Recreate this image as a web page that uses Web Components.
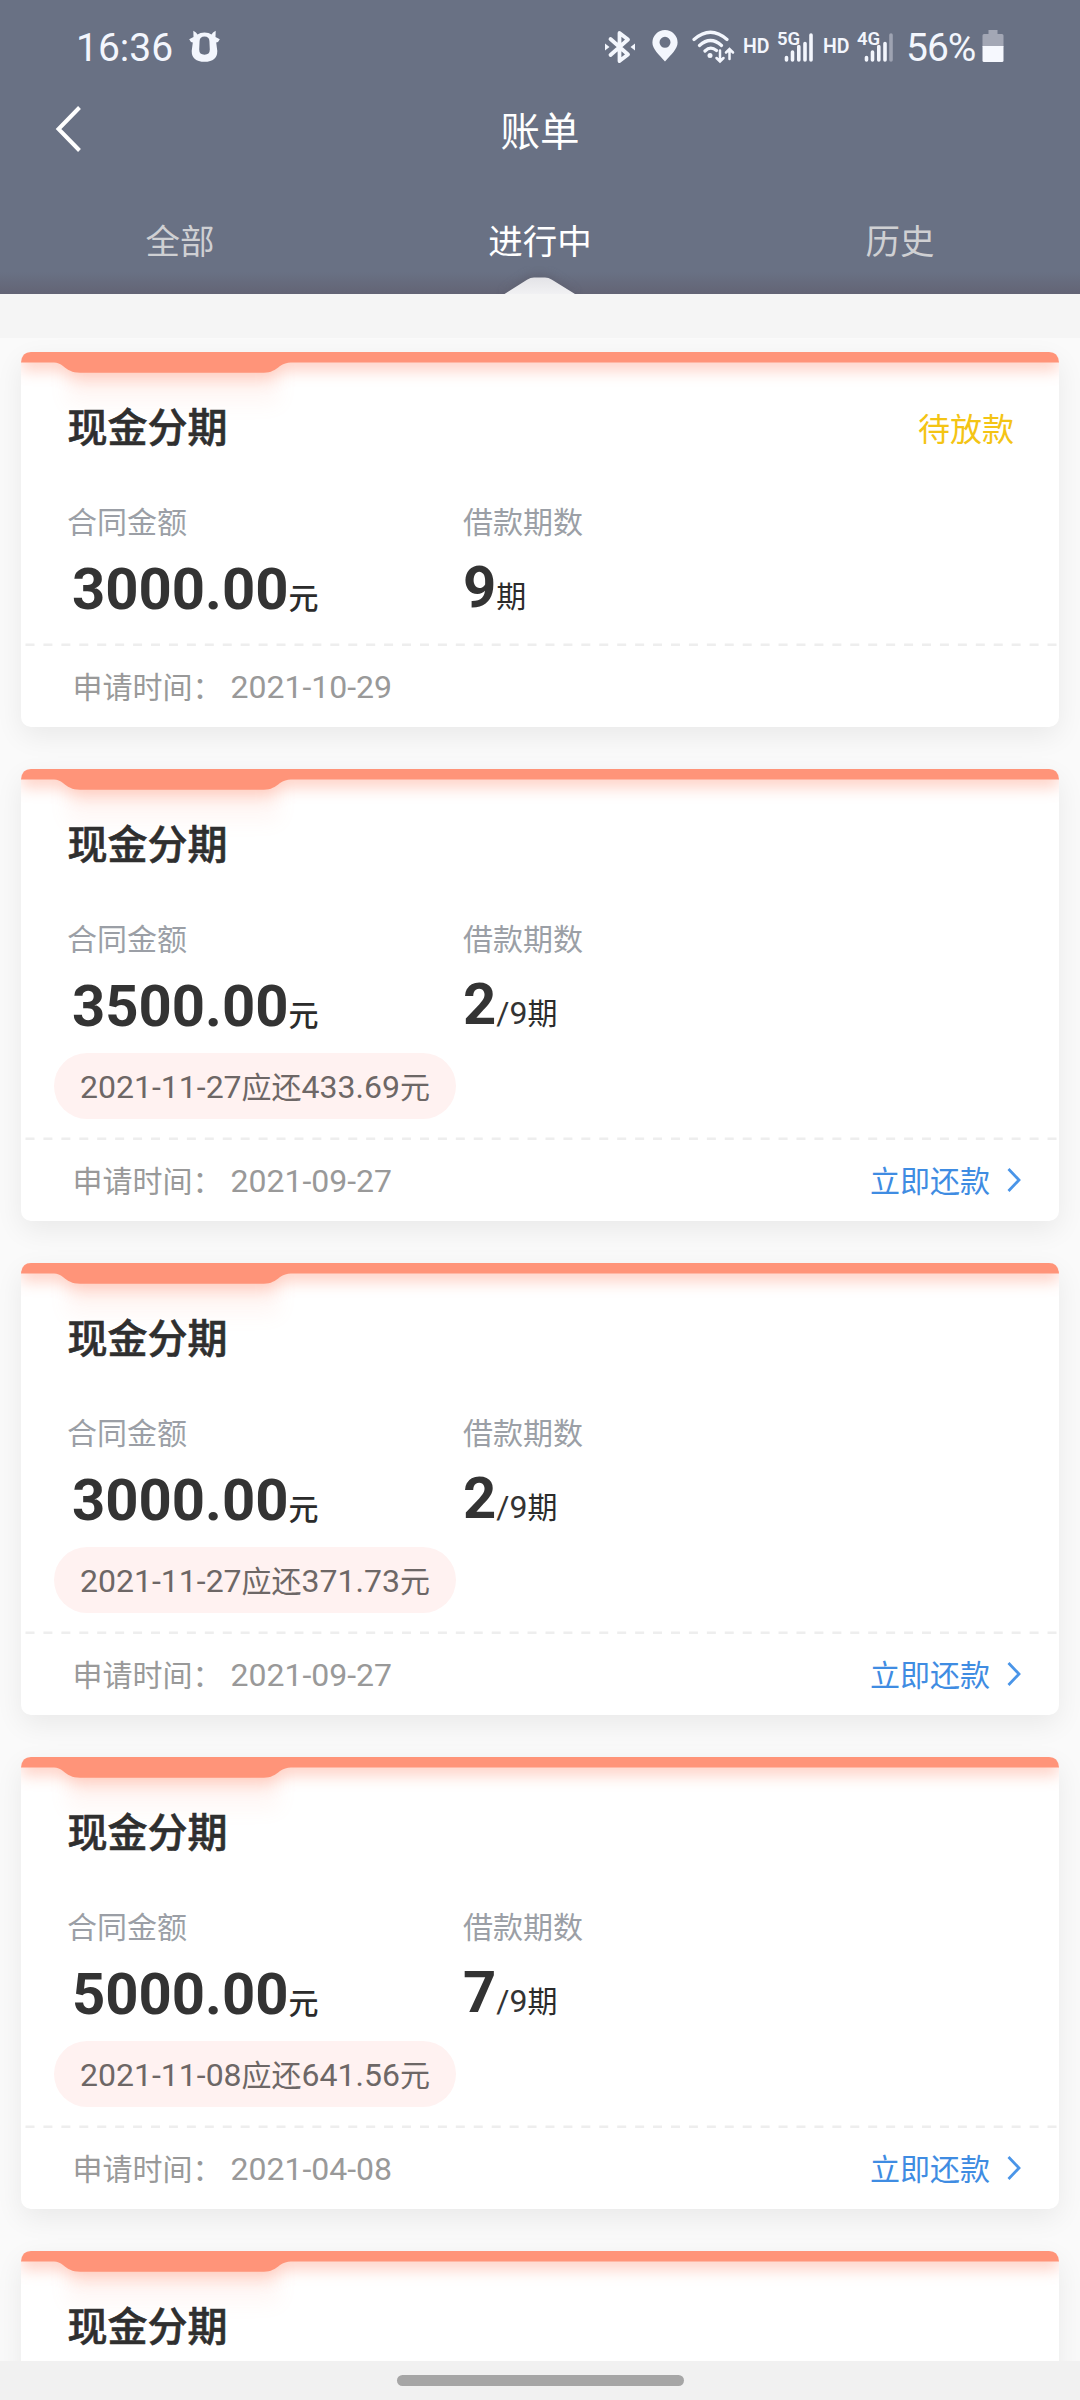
<!DOCTYPE html>
<html lang="zh-CN">
<head>
<meta charset="utf-8">
<title>账单</title>
<style>
html, body { margin: 0; padding: 0; }
body { width: 1080px; height: 2400px; overflow: hidden; background: #fafafa; font-family: "Noto Sans CJK SC", sans-serif; }
</style>
</head>
<body>
<bill-app></bill-app>
<script>
const define = (name, html) => customElements.define(name, class extends HTMLElement {
  constructor() {
    super();
    this.attachShadow({ mode: 'open' });
  }
  connectedCallback() {
    const t = document.createElement('template');
    t.innerHTML = typeof html === 'function' ? html(this) : html;
    this.shadowRoot.replaceChildren(t.content.cloneNode(true));
  }
});

define('status-bar', `
<style>
:host { display: flex; align-items: center; height: 92px; padding: 2px 76px 0 76px; box-sizing: border-box; color: #f3f6fd; font-family: Roboto, sans-serif; }
svg { display: block; flex: none; }
.time { font-size: 39px; line-height: 48px; width: 113px; white-space: nowrap; padding-top: 1px; }
.grow { flex: 1; }
.hd { font-size: 19.5px; font-weight: 600; line-height: 24px; width: 27px; white-space: nowrap; }
.sig { position: relative; width: 38px; height: 34px; }
.sig span { position: absolute; left: 0; top: 0; font-size: 18.5px; font-weight: 600; line-height: 18px; }
.pct { font-size: 39px; line-height: 48px; width: 76px; white-space: nowrap; letter-spacing: -1px; padding-top: 2px; }
</style>
<span class="time">16:36</span>
<svg width="32" height="34" viewBox="0 0 32 34">
  <path fill="#f3f6fd" fill-rule="evenodd" d="M4.300 .8 Q7.500 2.500 8.500 4.500 Q11 2.600 15.500 2.600 Q20 2.600 22.500 4.500 Q23.500 2.500 26.700 .8 L26.500 7 L30.800 9.300 Q29.500 12.500 27.200 12.600 L28.300 21 Q28.300 31.800 15.500 31.800 Q2.700 31.800 2.700 21 L3.800 12.600 Q1.500 12.500 .2 9.300 L4.500 7 Z M15.500 6.500 Q10.800 6.500 10.600 11 L10.200 19.500 Q10.200 24.700 15.500 24.700 Q20.800 24.700 20.800 19.500 L20.400 11 Q20.200 6.500 15.500 6.500 Z"/>
</svg>
<span class="grow"></span>
<svg width="30" height="34" viewBox="0 0 30 34" fill="none" stroke="#f3f6fd" stroke-width="3.800" stroke-linejoin="round" stroke-linecap="round" style="margin-right:17px">
  <path d="M5.500 9 L23 24.500 L14.500 31 V3 L23 9.500 L5.500 25"/>
  <path d="M0 13.500 L4.500 17 L0 20.500 Z M30 13.500 L25.500 17 L30 20.500 Z" fill="#f3f6fd" stroke="none"/>
</svg>
<svg width="26" height="32" viewBox="0 0 26 32" style="margin-right:14px;margin-top:-2px">
  <path fill="#f3f6fd" fill-rule="evenodd" d="M13 0 A12.600 12.600 0 0 1 25.600 12.600 C25.600 19 19 25 13 31.500 C7 25 .4 19 .4 12.600 A12.600 12.600 0 0 1 13 0 Z M13 6.800 A5.500 5.500 0 1 0 13 17.800 A5.500 5.500 0 1 0 13 6.800 Z"/>
</svg>
<svg width="43" height="34" viewBox="0 0 43 34" fill="none" stroke="#f3f6fd" stroke-width="3.200" stroke-linecap="round" style="margin-right:8px;margin-top:-1px">
  <path d="M2 9.500 Q18.500 -5 35 9.500 M7.500 15.500 Q18.500 5.500 29.500 15.500 M13 21 Q18.500 15.500 24.500 20.500"/>
  <circle cx="18" cy="25.500" r="2.500" fill="#f3f6fd" stroke="none"/>
  <path d="M28 20.500 V31 M24.500 28 L28 31.500 L31.500 28 M37.500 29 V19.500 M34 22.500 L37.500 19 L41 22.500" stroke-width="2.500"/>
</svg>
<span class="hd">HD</span>
<span class="sig" style="margin-left:7px"><span>5G</span>
<svg width="38" height="34" viewBox="0 0 38 34" stroke="#f3f6fd" stroke-width="3.600" stroke-linecap="round"><path d="M9.500 27.500V30 M15.500 22V30 M21.800 16.500V30 M28 13.500V30 M34 5V30"/></svg></span>
<span class="hd" style="margin-left:8px">HD</span>
<span class="sig" style="margin-left:7px"><span>4G</span>
<svg width="38" height="34" viewBox="0 0 38 34" stroke="#f3f6fd" stroke-width="3.600" stroke-linecap="round"><path d="M9.500 27.500V30 M15.500 22V30 M21.800 16.500V30 M28 13.500V30"/><path d="M34 5V30" stroke="#9ea3b2"/></svg></span>
<span class="pct" style="margin-left:11px">56%</span>
<svg width="22" height="34" viewBox="0 0 22 34" style="margin-top:-2px"><path fill="#a3a7b5" d="M6.500 1 H15.500 V5 H20 Q21.500 5 21.500 6.500 V18 H.5 V6.500 Q.5 5 2 5 H6.500 Z"/><path fill="#f6f8fe" d="M.5 17 H21.500 V31.500 Q21.500 33 20 33 H2 Q.5 33 .5 31.500 Z"/></svg>
`);

define('nav-bar', `
<style>
:host { display: grid; grid-template-columns: 1fr auto 1fr; align-items: center; height: 73px; padding: 0 54px; color: #fff; }
svg { display: block; }
h1 { margin: 0; font-size: 39.5px; font-weight: 400; line-height: 73px; }
</style>
<svg width="30" height="48" viewBox="0 0 30 48" fill="none" stroke="#fff" stroke-width="4"><path d="M25.500 2.500 L4.500 24 L25.500 45.500"/></svg>
<h1><slot></slot></h1><span></span>
`);

define('tab-item', `
<style>
:host { display: flex; flex-direction: column; align-items: center; flex: 1; color: #cfd0d3; font-size: 34.500px; line-height: 60px; }
:host([active]) { color: #fff; }
.label { height: 57px; }
svg { display: block; visibility: hidden; }
:host([active]) svg { visibility: visible; }
</style>
<span class="label"><slot></slot></span>
<svg width="110" height="28" viewBox="0 0 110 28">
  <defs>
    <linearGradient id="g" x1="0" y1="0" x2="0" y2="1"><stop offset="0" stop-color="#e3e3e7"/><stop offset="1" stop-color="#f1f1f3"/></linearGradient>
    <filter id="b" x="-30%" y="-50%" width="160%" height="200%"><feGaussianBlur stdDeviation="5"/></filter>
  </defs>
  <path d="M18 28 L43 10 Q54 6 65 10 L91 28 Z" fill="#5a5b6b" opacity=".6" filter="url(#b)"/>
  <path d="M19.500 28 L42 13.800 Q45.500 11.500 49 11.500 H60 Q63.500 11.500 67 13.800 L90 28 Z" fill="url(#g)"/>
</svg>
`);

define('tab-strip', `
<style>
:host { display: flex; height: 129px; padding-top: 44px; box-sizing: border-box; background: linear-gradient(to bottom, rgba(96,94,110,0) 107px, rgba(96,94,110,.6) 126px, rgba(96,94,110,.7)); }
</style><slot></slot>
`);

define('due-pill', `
<style>
:host { display: flex; align-items: center; justify-content: center; width: 402px; height: 66px; border-radius: 33px; background: #fff2f1; color: #6d6766; font: 32px/66px Roboto, sans-serif; white-space: nowrap; }
.zh { font-family: "Noto Sans CJK SC", sans-serif; font-size: 30px; }
</style>
<span><slot name="date"></slot><span class="zh">应还</span><slot name="sum"></slot><span class="zh">元</span></span>
`);

// Coral strip along the top of a card, with its wider tongue and the glow below it.
define('card-ribbon', `
<style>:host { display: block; } svg { display: block; }</style>
<svg width="1038" height="90" viewBox="0 0 1038 90">
  <defs>
    <filter id="s" x="-5%" y="-100%" width="110%" height="500%"><feGaussianBlur stdDeviation="8"/></filter>
    <filter id="f" x="-20%" y="-60%" width="140%" height="220%"><feGaussianBlur stdDeviation="10"/></filter>
    <clipPath id="c"><path d="M0 10 Q0 0 10 0 H1028 Q1038 0 1038 10 V90 H0 Z"/></clipPath>
  </defs>
  <g clip-path="url(#c)">
    <rect x="46" y="0" width="212" height="52" fill="#ff9479" opacity=".07" filter="url(#f)"/>
    <path d="M0 0 H1038 V18 H262 Q254 27 244 27 H60 Q50 27 42 18 H0 Z" fill="#ff9479" opacity=".45" filter="url(#s)"/>
  </g>
  <path d="M0 10.400 Q1 0 10 0 H1028 Q1037 0 1038 10.400 H270 Q264 10.400 259 14 C254 18 250 20.700 243 20.700 H59 C51 20.700 47 18 42 14 Q38 10.400 33 10.400 Z" fill="#ff9479"/>
</svg>
`);

define('loan-card', el => {
  const a = n => el.getAttribute(n);
  const total = a('paid') ? `<b>${a('paid')}</b><span class="n">/${a('total')}</span>` : `<b>${a('total')}</b>`;
  const body = a('amount') ? `
<div class="grid">
  <span class="k">合同金额</span><span class="k">借款期数</span>
  <div class="v amt"><b>${a('amount')}</b>元</div>
  <div class="v per">${total}<span class="u">期</span></div>
</div>
${a('due') ? `<due-pill><span slot="date">${a('due')}</span><span slot="sum">${a('sum')}</span></due-pill>` : ''}
<svg class="dash" width="1038" height="4" viewBox="0 0 1038 4"><path d="M4.500 1.800 H1036" stroke="#eeeeee" stroke-width="2.600" stroke-dasharray="9 8.930"/></svg>
<div class="foot"><span class="zh">申请时间：</span><span class="date">${a('applied')}</span>${a('due') ? `<span class="pay zh">立即还款</span>
<svg width="14" height="26" viewBox="0 0 14 26" fill="none" stroke="#4a95e8" stroke-width="2.800"><path d="M1.500 2 L12 13 L1.500 24"/></svg>` : ''}</div>` : '';
  return `
<style>
:host { display: flex; flex-direction: column; width: 1038px; height: ${a('due') ? 451.5 : 374.5}px; flex: none; box-sizing: border-box; position: relative; background: #fff; border-radius: 10px; box-shadow: 0 9px 28px rgba(0,0,0,.07); color: #333; }
card-ribbon { position: absolute; left: 0; top: 0; }
.head, .grid, .foot, due-pill, .dash { position: relative; }
.head { display: flex; justify-content: space-between; align-items: center; height: 64px; margin-top: 41px; padding: 0 45px 0 46.500px; }
h2 { margin: 0; font-size: 40px; font-weight: 500; line-height: 64px; color: #2f2f2f; -webkit-text-stroke: .6px #2f2f2f; }
.state { font-size: 32px; line-height: 64px; padding-top: 3px; color: #f4c414; }
.grid { display: grid; grid-template-columns: 396px 1fr; grid-template-rows: 40px 68px; row-gap: 15px; margin-top: 43px; padding-left: 46px; white-space: nowrap; }
.k { font-size: 30px; line-height: 40px; color: #9b9fa6; }
.v { font: 30px/68px "Noto Sans CJK SC", sans-serif; height: 68px; color: #2b2b2b; }
.v b { font: 700 58px/68px Roboto, sans-serif; color: #333; }
.v .n { font: 32px/68px Roboto, sans-serif; color: #333; }
.amt { padding-left: 5px; font-weight: 500; }
.per { margin-top: -2px; }
.per .u { font-size: 30px; }
due-pill { margin: 13px 0 -2px 33px; }
.dash { display: block; margin-top: 20px; flex: none; }
.foot { display: flex; align-items: center; height: 78px; padding: 0 38px 0 51.500px; font-size: 30px; line-height: 78px; color: #999; }
.zh { margin-top: -2.500px; }
.date { font: 32px/78px Roboto, sans-serif; margin-left: 8px; margin-top: 1px; flex: 1; }
.pay { color: #3f8ce2; }
.foot svg { display: block; margin-left: 17px; margin-top: -1px; }
</style>
<card-ribbon></card-ribbon>
<div class="head"><h2><slot></slot></h2>${a('state') ? `<span class="state">${a('state')}</span>` : ''}</div>
${body}
`; });

define('home-handle', `
<style>
:host { display: flex; justify-content: center; align-items: flex-start; height: 39px; padding-top: 14px; box-sizing: border-box; flex: none; background: #f1f1f1; position: relative; }
i { display: block; width: 287px; height: 11px; border-radius: 6px; background: #a6a6a6; }
</style><i></i>
`);

define('bill-app', `
<style>
:host { display: flex; flex-direction: column; width: 1080px; height: 2400px; overflow: hidden; }
header { display: block; flex: none; height: 294px; background: #697184; }
.list { flex: 1; min-height: 0; overflow: hidden; display: flex; flex-direction: column; align-items: center; gap: 42.500px; }
.strip { flex: none; width: 100%; height: 44px; background: #f5f5f5; position: relative; z-index: 1; margin-bottom: -28.500px; }
</style>
<header>
  <status-bar></status-bar>
  <nav-bar>账单</nav-bar>
  <tab-strip><tab-item>全部</tab-item><tab-item active>进行中</tab-item><tab-item>历史</tab-item></tab-strip>
</header>
<div class="list">
  <div class="strip"></div>
  <loan-card state="待放款" amount="3000.00" total="9" applied="2021-10-29">现金分期</loan-card>
  <loan-card amount="3500.00" paid="2" total="9" due="2021-11-27" sum="433.69" applied="2021-09-27">现金分期</loan-card>
  <loan-card amount="3000.00" paid="2" total="9" due="2021-11-27" sum="371.73" applied="2021-09-27">现金分期</loan-card>
  <loan-card amount="5000.00" paid="7" total="9" due="2021-11-08" sum="641.56" applied="2021-04-08">现金分期</loan-card>
  <loan-card>现金分期</loan-card>
</div>
<home-handle></home-handle>
`);
</script>
</body>
</html>
